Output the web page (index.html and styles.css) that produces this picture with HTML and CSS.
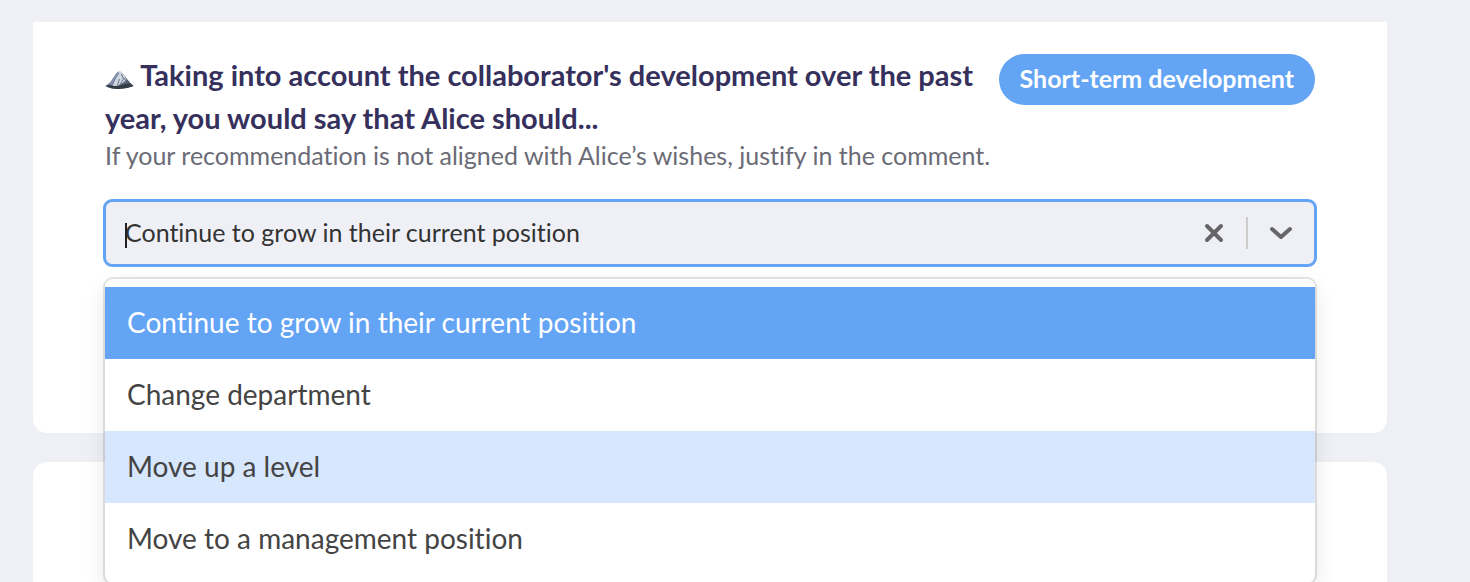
FILE: index.html
```
<!DOCTYPE html>
<html lang="en">
<head>
    <meta charset="UTF-8">
    <meta name="viewport" content="width=device-width, initial-scale=1.0">
    <title>Review</title>
    <link rel="stylesheet" href="styles.css">
</head>
<body>
    <main class="page">
        <section class="card">
            <div class="question-header">
                <h2 class="question-title">
                    <svg class="mountain" viewBox="0 0 28 20" aria-hidden="true">
                        <defs>
                            <linearGradient id="rock" x1="0" y1="0" x2="1" y2="1">
                                <stop offset="0.2" stop-color="#8d9bb2"/>
                                <stop offset="0.9" stop-color="#3b4552"/>
                            </linearGradient>
                        </defs>
                        <path d="M0 16 L5 12 L9 6 L12 2 Q14 1 16 2 L20 7 L24 12 L28 16 Q21 19 13 19 Q5 19 0 16Z" fill="url(#rock)"/>
                        <path d="M12 2 Q14 1 16 2 L19 6 L21 10 L17 13 L12 16 L7 16 L10 9Z" fill="#cfd6e0"/>
                        <path d="M12 2 L14 3 L9 11 L6 15 L4 14 L9 6Z" fill="#8090aa"/>
                        <path d="M16 4 L18 9 L16 12 M14 9 L12 15 M19 8 L21 14 M16 12 L14 16" fill="none" stroke="#667386"/>
                        <path d="M0 16 Q4 14 8 16 Q15 16 20 14 Q24 13 28 16 Q21 19 13 19 Q5 19 0 16Z" fill="#343d46"/>
                    </svg>
                    Taking into account the collaborator's development over the past year, you would say that Alice should...
                </h2>
                <span class="badge">Short-term development</span>
            </div>
            <label class="hint" for="recommendation">If your recommendation is not aligned with Alice’s wishes, justify in the comment.</label>
            <div class="select">
                <div class="control">
                    <select id="recommendation" class="value">
                        <option selected>Continue to grow in their current position</option>
                        <option>Change department</option>
                        <option>Move up a level</option>
                        <option>Move to a management position</option>
                    </select>
                    <span class="caret"></span>
                    <button type="button" class="icon-btn clear-btn" aria-label="Clear">
                        <svg width="20" height="22" viewBox="0 0 20 22"><path d="M3 4 L17 18 M17 4 L3 18"/></svg>
                    </button>
                    <span class="separator"></span>
                    <button type="button" class="icon-btn toggle-btn" aria-label="Toggle menu">
                        <svg width="24" height="16" viewBox="0 0 24 16"><path d="M3 4 L12 12 L21 4"/></svg>
                    </button>
                </div>
                <div class="menu">
                    <button type="button" class="option selected">Continue to grow in their current position</button>
                    <button type="button" class="option">Change department</button>
                    <button type="button" class="option focused">Move up a level</button>
                    <button type="button" class="option">Move to a management position</button>
                </div>
            </div>
        </section>
        <section class="card"></section>
    </main>
</body>
</html>
```
FILE: styles.css
```
* {
    box-sizing: border-box;
}
body {
    margin: 0;
    height: 100vh;
    overflow: hidden;
    background-color: #eff0f6;
    font-family: Lato, "Liberation Sans", sans-serif;
    font-variant-ligatures: none;
}
.page {
    padding: 22px 83px 0 33px;
}
.card {
    min-height: 120px;
    margin-bottom: 29px;
    padding: 31px 72px 166px;
    background-color: white;
    border-radius: 14px;
}
.card:first-child {
    border-radius: 0 0 14px 14px;
}
.question-header {
    display: flex;
    align-items: flex-start;
    gap: 8px;
}
.question-title {
    flex: 1;
    margin: 0;
    color: #35305c;
    font-size: 29px;
    font-weight: 700;
    line-height: 43px;
}
.mountain {
    width: 29px;
    height: 20px;
    vertical-align: -4px;
}
.badge {
    margin-top: 1px;
    padding: 0 21px 3px;
    border-radius: 26px;
    background-color: #64a4f4;
    color: white;
    font-size: 25px;
    font-weight: 700;
    line-height: 48px;
    white-space: nowrap;
}
.hint {
    display: block;
    color: #6b6b76;
    font-size: 25px;
    line-height: 32px;
}
.select {
    position: relative;
    margin-top: 28px;
}
.control {
    position: relative;
    display: flex;
    align-items: center;
    height: 68px;
    margin: 0 -2px;
    border: 3px solid #64a4f4;
    border-radius: 9px;
    background-color: #eff0f6;
}
.value {
    flex: 1;
    height: 100%;
    padding: 0 19px 2px;
    border: none;
    outline: none;
    appearance: none;
    background: none;
    color: #333;
    font-family: inherit;
    font-size: 25px;
    font-variant-ligatures: none;
}
.caret {
    position: absolute;
    top: 21px;
    left: 19px;
    width: 2px;
    height: 25px;
    background-color: #222;
}
.icon-btn {
    display: flex;
    align-items: center;
    justify-content: center;
    width: 66px;
    height: 100%;
    padding: 0;
    border: none;
    background: none;
    cursor: pointer;
}
.clear-btn {
    width: 64px;
}
.icon-btn path {
    fill: none;
    stroke: #666;
    stroke-width: 4;
    stroke-linecap: round;
    stroke-linejoin: round;
}
.separator {
    width: 2px;
    height: 32px;
    background-color: #ccc;
}
.menu {
    position: absolute;
    top: 100%;
    left: 0;
    right: 0;
    z-index: 1;
    margin-top: 12px;
    padding: 8px 0;
    border-radius: 8px;
    background-color: white;
    box-shadow: 0 0 0 2px rgba(0, 0, 0, 0.1), 0 8px 22px rgba(0, 0, 0, 0.1);
}
.option {
    display: block;
    width: 100%;
    height: 72px;
    padding: 0 22px 2px;
    border: none;
    background: none;
    color: #444;
    font-family: inherit;
    font-size: 28px;
    font-variant-ligatures: none;
    text-align: left;
    cursor: pointer;
}
.option.selected {
    background-color: #64a4f4;
    color: white;
}
.option.focused {
    background-color: #d7e7fd;
}
```
